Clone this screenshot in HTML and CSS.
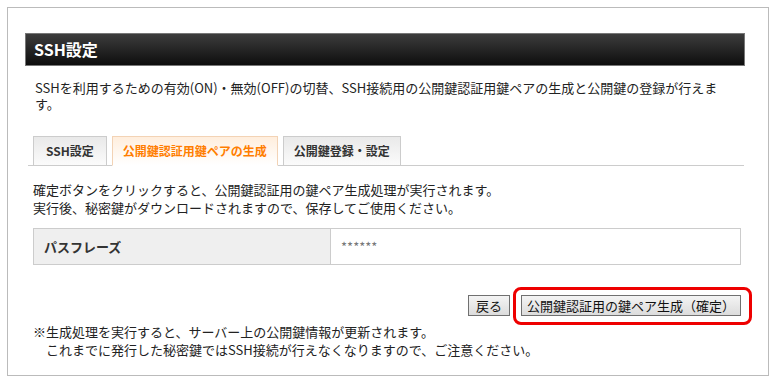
FILE: index.html
```html
<!DOCTYPE html>
<html lang="ja">
<head>
  <meta charset="UTF-8">
  <title>SSH設定</title>
  <link rel="stylesheet" href="styles.css">
</head>
<body>

<div class="box">
  <h2 class="title">SSH設定</h2>
  <p class="lead">SSHを利用するための有効(ON)・無効(OFF)の切替、SSH接続用の公開鍵認証用鍵ペアの生成と公開鍵の登録が行えます。</p>

  <!-- タブ -->
  <ul class="tabs">
    <li class="tab">SSH設定</li>
    <li class="tab active">公開鍵認証用鍵ペアの生成</li>
    <li class="tab">公開鍵登録・設定</li>
  </ul>

  <p class="info">確定ボタンをクリックすると、公開鍵認証用の鍵ペア生成処理が実行されます。<br>実行後、秘密鍵がダウンロードされますので、保存してご使用ください。</p>

  <table class="form">
    <tr>
      <th>パスフレーズ</th>
      <td>******</td>
    </tr>
  </table>

  <div class="actions">
    <button class="btn">戻る</button>
    <span class="highlight"><button class="btn btn-main">公開鍵認証用の鍵ペア生成（確定）</button></span>
  </div>

  <p class="note">※生成処理を実行すると、サーバー上の公開鍵情報が更新されます。<br><span class="indent">これまでに発行した秘密鍵ではSSH接続が行えなくなりますので、ご注意ください。</span></p>
</div>

</body>
</html>
```

FILE: styles.css
```css
* {
  margin: 0;
  padding: 0;
  box-sizing: border-box;
}

html, body {
  background: #fff;
  color: #222;
  font-family: "Noto Sans CJK JP", "Noto Sans", sans-serif;
  font-size: 13px;
}

.box {
  margin: 7px 9px 8px 7px;
  height: 369px;
  border: 1px solid #bbb;
  padding: 25px 27px 0 25px;
}

.title {
  margin: 0 -4px 0 -8px;
  height: 33px;
  padding-left: 8px;
  border: 1px solid #777;
  background: linear-gradient(#3c3c3c, #0e0e0e);
  color: #fff;
  font-size: 16px;
  font-weight: bold;
  line-height: 31px;
}

.lead {
  margin: 14px 0 0 2px;
  line-height: 16px;
}

.tabs {
  list-style: none;
  display: flex;
  gap: 5px;
  margin: 24px -3px 0 -5px;
  padding-left: 5px;
  border-bottom: 1px solid #ccc;
}

.tab {
  height: 30px;
  margin-bottom: -1px;
  padding: 0 10px;
  border: 1px solid #ccc;
  background: linear-gradient(#e9e9e9, #fbfbfb);
  color: #333;
  font-size: 12px;
  font-weight: bold;
  line-height: 28px;
}

.tab:first-child {
  padding: 0 12px;
}

.tab.active {
  border-color: #f3d3b5;
  border-bottom-color: #fff;
  background: linear-gradient(#ffeedd, #fff);
  color: #ff7e00;
}

.info {
  margin-top: 15px;
  line-height: 18px;
}

.form {
  width: 100%;
  margin-top: 11px;
  border-collapse: collapse;
  border: 1px solid #ccc;
}

.form th {
  width: 297px;
  height: 36px;
  padding-left: 10px;
  background: #efefef;
  border-right: 1px solid #ccc;
  color: #333;
  font-weight: bold;
  text-align: left;
}

.form td {
  padding-left: 10px;
  color: #777;
  font-size: 13px;
}

.actions {
  display: flex;
  justify-content: flex-end;
  align-items: center;
  gap: 11px;
  margin-top: 30px;
}

.btn {
  height: 21px;
  padding: 0 7px;
  border: 1px solid #707070;
  background: linear-gradient(#f4f4f4, #dcdcdc);
  color: #111;
  font-family: inherit;
  font-size: 13px;
  line-height: 19px;
}

.btn-main {
  padding: 0 5px;
}

.highlight {
  position: relative;
  display: flex;
}

.highlight::after {
  content: "";
  position: absolute;
  top: -8px;
  right: -11px;
  bottom: -9px;
  left: -8px;
  border: 3px solid #e00;
  border-radius: 8px;
}

.note {
  margin-top: 7px;
  line-height: 18px;
}

.indent {
  padding-left: 13px;
}
```
